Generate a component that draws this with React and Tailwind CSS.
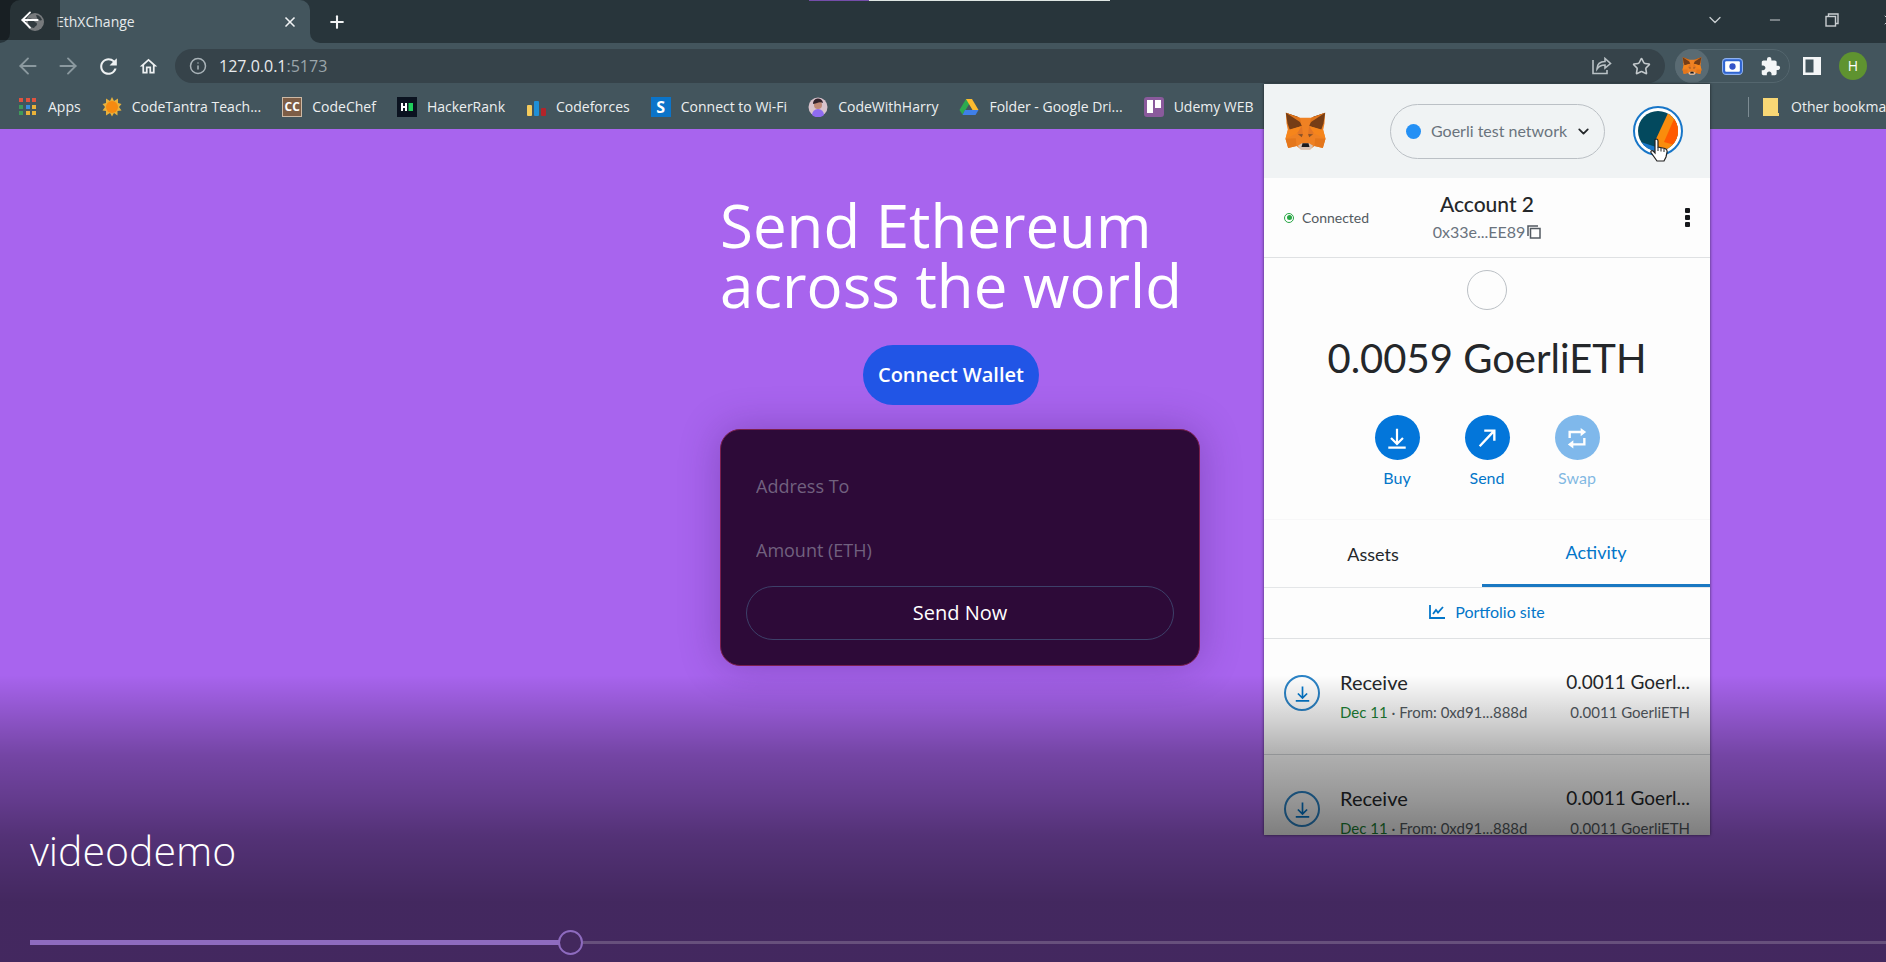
import { useState } from "react";
import { ArrowLeft, ArrowRight, ChevronDown, Info, Minus, Plus, Star, X } from "lucide-react";
import { MdOutlineHome, MdRefresh, MdExtension } from "react-icons/md";

const ACTIVITY = [
    { id: 1, title: "Receive", date: "Dec 11", from: "From: 0xd91...888d", amount: "0.0011 Goerl...", total: "0.0011 GoerliETH" },
    { id: 2, title: "Receive", date: "Dec 11", from: "From: 0xd91...888d", amount: "0.0011 Goerl...", total: "0.0011 GoerliETH" },
];

const Fox = ({ className }) => (
    <svg viewBox="0 0 122 114" className={className} aria-hidden="true">
        <path d="M2 2 44 17H78L120 2 118 34 114 54 121 80 113 108 88 102 75 112H47L34 102 9 108 1 80 8 54 4 34Z" fill="#ef8123" />
        <path d="M2 2 38 14 50 42 14 54 7 34Z" fill="#763d16" />
        <path d="M120 2 84 14 72 42 108 54 115 34Z" fill="#763d16" />
        <path d="M2 2 44 17 48 32Z" fill="#e2761b" />
        <path d="M120 2 78 17 74 32Z" fill="#e2761b" />
        <path d="M8 54 50 42 36 64 1 80Z" fill="#f6851b" />
        <path d="M114 54 72 42 86 64 121 80Z" fill="#f6851b" />
        <path d="M1 80 32 79 34 102 9 108Z" fill="#e4761b" />
        <path d="M121 80 90 79 88 102 113 108Z" fill="#e4761b" />
        <path d="M50 42 36 64 54 72Z" fill="#e27525" />
        <path d="M72 42 86 64 68 72Z" fill="#e27525" />
        <path d="M38 67 53 66 50 76Z" fill="#8a5328" />
        <path d="M84 67 69 66 72 76Z" fill="#8a5328" />
        <path d="M38 101 50 94H72L84 101 75 113H47Z" fill="#d7c1b3" />
        <path d="M52 94H70L73 105H49Z" fill="#1b1a1c" />
    </svg>
);

const GlobeIcon = ({ className }) => (
    <svg viewBox="0 0 18 18" className={className} aria-hidden="true">
        <circle cx="9" cy="9" r="9" fill="#c6cccf" />
        <path d="M2 6c3-1 5 0 6 2s3 1 3 3-2 2-3 4c-3 0-6-3-6-6ZM10 2c3 0 5 2 6 5-2 1-4 0-5-2Z" fill="#56656c" />
    </svg>
);

const BuyIcon = ({ className }) => (
    <svg viewBox="0 0 24 24" className={className} fill="none" stroke="currentColor" strokeWidth="2.4" aria-hidden="true">
        <path d="M12 2v16M5.5 12l6.5 6.5 6.5-6.5M2.5 22.5h19" />
    </svg>
);

const SendIcon = ({ className }) => (
    <svg viewBox="0 0 24 24" className={className} fill="none" stroke="currentColor" strokeWidth="2.6" aria-hidden="true">
        <path d="M4 21 20 4M9 4h11v11" />
    </svg>
);

const SwapIcon = ({ className }) => (
    <svg viewBox="0 0 24 24" className={className} fill="none" stroke="currentColor" strokeWidth="2.6" aria-hidden="true">
        <path d="M4 12V5.500h13M20 12v7H7" />
        <path d="M16 1 22 5.500 16 10ZM8 14.500 2 19l6 4.500Z" fill="currentColor" stroke="none" />
    </svg>
);

const BOOKMARKS = [
    {
        label: "Apps",
        icon: (
            <svg viewBox="0 0 20 20" className="size-5" aria-hidden="true">
                <path d="M1 1h4v4H1zM8 1h4v4H8zM14 1h4v4h-4z" fill="#e0533f" />
                <path d="M1 8h4v4H1zM1 14h4v4H1z" fill="#3f9a5a" />
                <path d="M8 8h4v4H8z" fill="#3b8de0" />
                <path d="M14 8h4v4h-4zM8 14h4v4H8zM14 14h4v4h-4z" fill="#e9b23a" />
            </svg>
        ),
    },
    {
        label: "CodeTantra Teach...",
        icon: (
            <svg viewBox="0 0 20 20" className="size-5" aria-hidden="true">
                <path d="M10 0 12 4 16 1.500 16 6 19.500 7 17 10 19.500 13.500 15.500 14 15.500 18.500 12 16 10 19.500 8 16 4 18.500 4 14 .5 13.500 3 10 .5 7 4 6 4 1.500 8 4Z" fill="#e8b13c" />
                <circle cx="10" cy="10" r="6" fill="#f68a10" />
            </svg>
        ),
    },
    {
        label: "CodeChef",
        icon: <span className="flex size-5 items-center justify-center border border-[#cdb9a5] bg-[#7d5d46] text-xs font-bold text-white">CC</span>,
    },
    {
        label: "HackerRank",
        icon: (
            <svg viewBox="0 0 20 20" className="size-5" aria-hidden="true">
                <path d="M0 0h20v20H0z" fill="#0b1320" />
                <path d="M4 6h2v3h2V6h2v8H8v-3H6v3H4z" fill="#fff" />
                <path d="M11.500 6H16v8h-4.500z" fill="#1fcf5c" />
            </svg>
        ),
    },
    {
        label: "Codeforces",
        icon: (
            <svg viewBox="0 0 20 20" className="size-5" aria-hidden="true">
                <rect x="1" y="8" width="5" height="11" rx="1" fill="#f5cb5c" />
                <rect x="8" y="4" width="5" height="15" rx="1" fill="#1f8fd6" />
                <rect x="15" y="11" width="5" height="8" rx="1" fill="#b3242a" />
            </svg>
        ),
    },
    {
        label: "Connect to Wi-Fi",
        icon: <span className="flex size-5 items-center justify-center bg-[#0b74c9] text-base font-bold text-white">S</span>,
    },
    {
        label: "CodeWithHarry",
        icon: (
            <svg viewBox="0 0 20 20" className="size-5" aria-hidden="true">
                <circle cx="10" cy="10" r="9.500" fill="#d9c3cc" />
                <path d="M4 18a6 6 0 0 1 12 0 9 9 0 0 1-12 0Z" fill="#8f6bf0" />
                <circle cx="10" cy="8" r="4" fill="#c08a78" />
                <path d="M5 7a5 5 0 0 1 10-1c-2-1-4-1-6 0-1 0-2 1-4 1Z" fill="#33222b" />
            </svg>
        ),
    },
    {
        label: "Folder - Google Dri...",
        icon: (
            <svg viewBox="0 0 20 20" className="size-5" aria-hidden="true">
                <path d="M7 2h6l-3 5.500-6.500 10L.5 13Z" fill="#2da94f" />
                <path d="M7 2h6l6.500 11h-6Z" fill="#fdbb2f" />
                <path d="M6 13h13.500l-3 5H3.500Z" fill="#3f7fe8" />
            </svg>
        ),
    },
    {
        label: "Udemy WEB",
        icon: (
            <svg viewBox="0 0 20 20" className="size-5" aria-hidden="true">
                <rect width="20" height="20" rx="3" fill="#8a5a9c" />
                <path d="M3 3h6v13H3zM11 3h6v8h-6z" fill="#fff" />
            </svg>
        ),
    },
];

const TabStrip = () => (
    <div className="flex h-[43px] bg-[#43555d]">
        <div className="w-[10px] rounded-br-[10px] bg-[#28353b]" />
        <div className="w-[300px] bg-[#28353b]">
            <div className="flex h-full items-center rounded-t-[10px] bg-[#43555d] pr-3 pl-4">
                <GlobeIcon className="size-[18px] shrink-0" />
                <span className="ml-3 flex-1 text-sm text-[#e6eaec]">EthXChange</span>
                <button type="button" aria-label="Close tab">
                    <X size={16} strokeWidth={2.5} color="#f1f3f4" />
                </button>
            </div>
        </div>
        <div className="flex flex-1 rounded-bl-[10px] bg-[#28353b]">
            <button type="button" aria-label="New tab" className="ml-[17px]">
                <Plus size={20} strokeWidth={2.5} color="#f1f3f4" />
            </button>
            <div className="-mr-[11px] ml-auto flex items-center gap-[42px] pb-1 text-[#c9ced1]">
                <button type="button" aria-label="Search tabs"><ChevronDown size={20} strokeWidth={1.5} /></button>
                <button type="button" aria-label="Minimize"><Minus size={16} strokeWidth={1.5} /></button>
                <button type="button" aria-label="Restore">
                    <svg viewBox="0 0 14 14" className="size-[14px]" fill="none" stroke="currentColor" strokeWidth="1.4" aria-hidden="true">
                        <rect x="1" y="3.500" width="9.500" height="9.500" />
                        <path d="M3.500 3.500V1H13v9.500h-2.500" />
                    </svg>
                </button>
                <button type="button" aria-label="Close window"><X size={16} strokeWidth={1.5} /></button>
            </div>
        </div>
    </div>
);

const NAV_BUTTON = "flex size-[26px] items-center justify-center";

const Toolbar = () => (
    <div className="flex h-[46px] items-center bg-[#43555d] pr-[19px] pl-[15px]">
        <div className="flex gap-[14px] text-[#eef1f2]">
            <button type="button" aria-label="Back" className={NAV_BUTTON}><ArrowLeft size={26} strokeWidth={1.75} className="text-[#8b999f]" /></button>
            <button type="button" aria-label="Forward" className={NAV_BUTTON}><ArrowRight size={26} strokeWidth={1.75} className="text-[#8b999f]" /></button>
            <button type="button" aria-label="Reload" className={NAV_BUTTON}><MdRefresh size={25} /></button>
            <button type="button" aria-label="Home" className={NAV_BUTTON}><MdOutlineHome size={21} /></button>
        </div>
        <div className="ml-[14px] flex h-[34px] flex-1 items-center rounded-full bg-[#36434a] px-[14px]">
            <Info size={18} className="mr-3 text-[#a9b3b8]" />
            <p className="flex-1 text-base text-[#e8eaed]">
                127.0.0.1<span className="text-[#9ba6ab]">:5173</span>
            </p>
            <button type="button" aria-label="Share" className="mr-5">
                <svg viewBox="0 0 20 18" className="h-[18px] w-5" fill="none" stroke="#b9c1c5" strokeWidth="1.6" aria-hidden="true">
                    <path d="M1 3v13.500h14V13M5 12c0-5 3-7.500 8-7.500V1.500L18.500 6.500 13 11V8C9 8 7 9 5 12Z" />
                </svg>
            </button>
            <button type="button" aria-label="Bookmark this tab">
                <Star size={19} color="#c3c9cc" />
            </button>
        </div>
        <div className="ml-[10px] flex h-[34px] items-center gap-[13px] rounded-full border border-[#54666e] pr-[8px]">
            <button type="button" aria-label="MetaMask" className="-ml-px flex size-[34px] items-center justify-center rounded-full bg-[#5a6b73]">
                <Fox className="h-[18px] w-5" />
            </button>
            <button type="button" aria-label="Screen capture">
                <svg viewBox="0 0 20 16" className="h-[17px] w-[21px]" aria-hidden="true">
                    <rect width="20" height="16" rx="4" fill="#8fb2f0" />
                    <rect x="1" y="1" width="18" height="14" rx="3" fill="#2f64d0" />
                    <rect x="3" y="3" width="14" height="10" rx="1" fill="#fff" />
                    <circle cx="10" cy="8" r="3" fill="#3454c8" />
                </svg>
            </button>
            <button type="button" aria-label="Extensions" className="ml-1">
                <MdExtension size={21} color="#f4f6f7" />
            </button>
        </div>
        <button type="button" aria-label="Side panel" className="ml-[13px]">
            <svg viewBox="0 0 18 18" className="size-[18px]" aria-hidden="true">
                <path fillRule="evenodd" d="M0 0h18v18H0zM2.500 2.500v13h8v-13z" fill="#f4f6f7" />
            </svg>
        </button>
        <button type="button" aria-label="Profile" className="ml-[18px] flex size-7 items-center justify-center rounded-full bg-[#5f9330] text-sm text-white">
            H
        </button>
    </div>
);

const BookmarksBar = () => (
    <nav className="flex h-10 items-center overflow-hidden bg-[#43555d] pb-1 pl-[18px] text-sm whitespace-nowrap text-[#eceff0]">
        <div className="flex flex-1 gap-[21px] overflow-hidden">
            {BOOKMARKS.map((item) => (
                <a key={item.label} href="#" className="flex shrink-0 items-center gap-[10px]">
                    {item.icon}
                    {item.label}
                </a>
            ))}
        </div>
        <div className="flex w-[138px] shrink-0 items-center">
            <span className="h-5 w-px shrink-0 bg-[#7d8c93]" />
            <a href="#" className="ml-[14px] flex items-center gap-3">
                <svg viewBox="0 0 16 18" className="h-[18px] w-4" aria-hidden="true">
                    <path d="M0 0h15v15h1v3H0z" fill="#f8d775" />
                </svg>
                Other bookmarks
            </a>
        </div>
    </nav>
);

const TransferForm = () => {
    const [form, setForm] = useState({ addressTo: "", amount: "" });

    const handleChange = (e, name) => {
        setForm((prev) => ({ ...prev, [name]: e.target.value }));
    };

    return (
        <form
            onSubmit={(e) => e.preventDefault()}
            className="mt-6 w-[480px] rounded-[20px] border border-[#7a1f4d] bg-[#2d0a38] px-[25px] pt-7 pb-[25px] shadow-[0_0_40px_rgba(50,20,90,0.3)]"
        >
            <input
                type="text"
                aria-label="Address To"
                placeholder="Address To"
                value={form.addressTo}
                onChange={(e) => handleChange(e, "addressTo")}
                className="block h-14 w-full bg-transparent px-[10px] text-lg text-white outline-none placeholder:text-[#71617f]"
            />
            <input
                type="text"
                aria-label="Amount (ETH)"
                placeholder="Amount (ETH)"
                value={form.amount}
                onChange={(e) => handleChange(e, "amount")}
                className="mt-2 block h-14 w-full bg-transparent px-[10px] text-lg text-white outline-none placeholder:text-[#71617f]"
            />
            <button type="submit" className="mt-2 h-[54px] w-full rounded-full border border-[#3d4069] text-xl font-medium text-white">
                Send Now
            </button>
        </form>
    );
};

const WalletPopup = () => (
    <section className="absolute top-[84px] right-44 h-[751px] w-[446px] overflow-hidden bg-[#fdfdfd] font-[Lato,sans-serif] text-[#24272a] shadow-[0_0_3px_rgba(0,0,0,0.6)]">
        <header className="flex h-[94px] items-center bg-[#f0f3f4] pr-[27px] pl-[21px]">
            <Fox className="h-[38px] w-[41px]" />
            <button type="button" className="ml-auto flex h-[55px] w-[215px] items-center rounded-full border border-[#bbc0c5] pr-3 pl-[15px] text-base text-[#6a737d]">
                <span className="mr-[10px] size-[15px] rounded-full bg-[#2490f5]" />
                Goerli test network
                <ChevronDown size={17} strokeWidth={2.5} className="ml-auto text-[#24272a]" />
            </button>
            <button type="button" aria-label="Account menu" className="ml-7 size-[50px] rounded-full border-2 border-[#1876c8] bg-white p-[3px]">
                <svg viewBox="0 0 40 40" className="size-10" aria-hidden="true">
                    <clipPath id="avatar"><circle cx="20" cy="20" r="20" /></clipPath>
                    <g clipPath="url(#avatar)">
                        <path d="M0 0h40v40H0z" fill="#03495e" />
                        <path d="M31 0 18 28v12h22V0Z" fill="#fa8c0c" />
                        <path d="M36 8 26 31l14 4V8Z" fill="#ff5a00" />
                        <path d="M0 30 18 36v4H0Z" fill="#1877c9" />
                    </g>
                </svg>
            </button>
        </header>

        <div className="grid h-[80px] grid-cols-3 items-center border-b border-[#dfe1e3] px-5">
            <span className="flex items-center gap-2 text-sm text-[#535a61]">
                <span className="flex size-[10px] items-center justify-center rounded-full border border-[#28a745]">
                    <span className="size-[5px] rounded-full bg-[#28a745]" />
                </span>
                Connected
            </span>
            <div className="flex flex-col items-center pb-1">
                <h2 className="text-[21px] leading-8 font-medium">Account 2</h2>
                <button type="button" className="flex items-center gap-[2px] text-base text-[#6a737d]">
                    0x33e...EE89
                    <svg viewBox="0 0 14 14" className="size-[14px]" fill="none" stroke="#535a61" strokeWidth="1.5" aria-hidden="true">
                        <rect x="3.500" y="3.500" width="9.500" height="9.500" />
                        <path d="M1 11V1h10" />
                    </svg>
                </button>
            </div>
            <button type="button" aria-label="Account options" className="flex flex-col gap-[2px] justify-self-end">
                <span className="size-[5px] rounded-[1px] bg-[#16181b]" />
                <span className="size-[5px] rounded-[1px] bg-[#16181b]" />
                <span className="size-[5px] rounded-[1px] bg-[#16181b]" />
            </button>
        </div>

        <div className="flex h-[262px] flex-col items-center border-b border-[#f7f7f8] pt-3">
            <span className="size-10 rounded-full border border-[#bbc0c5]" />
            <p className="mt-6 text-[40px] leading-[48px]">0.0059 GoerliETH</p>
            <div className="mt-[33px] flex gap-10 text-base leading-5 text-[#0376c9]">
                <button type="button" className="flex w-[50px] flex-col items-center gap-2">
                    <span className="flex size-[45px] items-center justify-center rounded-full bg-[#0376da] text-white">
                        <BuyIcon className="size-[22px]" />
                    </span>
                    Buy
                </button>
                <button type="button" className="flex w-[50px] flex-col items-center gap-2">
                    <span className="flex size-[45px] items-center justify-center rounded-full bg-[#0376da] text-white">
                        <SendIcon className="size-[22px]" />
                    </span>
                    Send
                </button>
                <button type="button" disabled className="flex w-[50px] flex-col items-center gap-2 opacity-50">
                    <span className="flex size-[45px] items-center justify-center rounded-full bg-[#0376da] text-white">
                        <SwapIcon className="size-[22px]" />
                    </span>
                    Swap
                </button>
            </div>
        </div>

        <div role="tablist" className="flex h-[68px] border-b border-[#e4e6e8] text-lg">
            <button type="button" role="tab" aria-selected="false" className="w-[218px]">Assets</button>
            <button type="button" role="tab" aria-selected="true" className="flex-1 border-b-[3px] border-[#1a78c2] text-[#0376c9]">Activity</button>
        </div>
        <a href="#" className="flex h-[51px] items-center justify-center gap-[10px] border-b border-[#dfe1e3] pb-[2px] text-base text-[#0376c9]">
            <svg viewBox="0 0 16 14" className="h-[14px] w-4" fill="none" stroke="currentColor" strokeWidth="1.8" aria-hidden="true">
                <path d="M1 0v13h15M4 9l3-4 2 2.500L14 2" />
            </svg>
            Portfolio site
        </a>
        <ul>
            {ACTIVITY.map((tx) => (
                <li key={tx.id} className="flex h-[116px] border-b border-[#d2d5d8] px-5 pt-7">
                    <span className="mt-2 flex size-9 items-center justify-center rounded-full border-2 border-[#2b83c6] text-[#0376c9]">
                        <BuyIcon className="size-[17px]" />
                    </span>
                    <div className="ml-5 flex-1">
                        <h3 className="text-xl leading-[30px]">{tx.title}</h3>
                        <p className="text-[15px] leading-[30px] text-[#535a61]">
                            <span className="text-[#1c8234]">{tx.date}</span> · {tx.from}
                        </p>
                    </div>
                    <div className="text-right">
                        <p className="text-[19px] leading-[30px]">{tx.amount}</p>
                        <p className="text-[15px] leading-[30px] text-[#535a61]">{tx.total}</p>
                    </div>
                </li>
            ))}
        </ul>
    </section>
);

const PlayerOverlay = () => {
    const [progress, setProgress] = useState(29);

    return (
        <div className="absolute inset-x-0 bottom-0 flex h-[287px] flex-col justify-end bg-[linear-gradient(to_bottom,rgba(0,0,0,0)_0%,rgba(0,0,0,0.31)_28%,rgba(0,0,0,0.41)_44%,rgba(0,0,0,0.5)_56%,rgba(0,0,0,0.6)_79%)] pb-[7px] pl-[30px]">
            <h1 className="mb-[54px] text-[41px] leading-[50px] font-light text-white">videodemo</h1>
            <div className="relative flex h-[26px] items-center">
                <span className="h-[5px] bg-[#8e6bbf]" style={{ width: `${progress}%` }} />
                <span className="-ml-[10px] size-[25px] rounded-full border-2 border-[#8e6bbf] bg-[#43285d]" />
                <span className="h-[3px] flex-1 bg-[#67507c]" />
                <input
                    type="range"
                    aria-label="Seek"
                    min="0"
                    max="100"
                    value={progress}
                    onChange={(e) => setProgress(Number(e.target.value))}
                    className="absolute inset-0 w-full cursor-pointer opacity-0"
                />
            </div>
        </div>
    );
};

const HandCursor = () => (
    <svg viewBox="0 0 18 24" className="pointer-events-none absolute top-[138px] right-[218px] h-6 w-[18px]" aria-hidden="true">
        <path d="M5 1.500c1.500-1 3 0 3 1.500v6l7 1.500c1.500.5 2.200 1.500 2.200 3L16 19l-2 4H7L1 14.500c-.5-1.500 1-2.500 2.200-1.500L5 15Z" fill="#fff" stroke="#222" strokeWidth="1.2" />
        <path d="M8 9v4M11 10v3.500M14 11v3" stroke="#222" strokeWidth="1" />
    </svg>
);

const App = () => {
    return (
        <div className="relative flex h-screen flex-col overflow-hidden bg-[#a864ee] font-['Open_Sans',sans-serif]">
            <TabStrip />
            <Toolbar />
            <BookmarksBar />

            <main className="flex flex-1 flex-col items-center pt-[66px] pl-[34px]">
                <div>
                    <div className="flex w-fit flex-col items-center">
                        <h1 className="text-[60px] leading-[60px] text-white">
                            Send Ethereum
                            <br />
                            across the world
                        </h1>
                        <button type="button" className="mt-[30px] h-[60px] rounded-full bg-[#2155e6] px-[15px] text-xl font-semibold text-white">
                            Connect Wallet
                        </button>
                    </div>
                    <TransferForm />
                </div>
            </main>

            <WalletPopup />
            <HandCursor />
            <PlayerOverlay />

            <button type="button" aria-label="Back to library" className="absolute top-0 left-0 flex h-10 w-[60px] items-center justify-center bg-black/40 text-white">
                <ArrowLeft size={26} strokeWidth={1.75} />
            </button>
            <div className="absolute inset-x-0 top-0 flex justify-center pl-[33px]">
                <span className="h-px w-[60px] bg-[#744da9]" />
                <span className="h-px w-[241px] bg-[#dfe6e3]" />
            </div>
        </div>
    );
};

export default App;
